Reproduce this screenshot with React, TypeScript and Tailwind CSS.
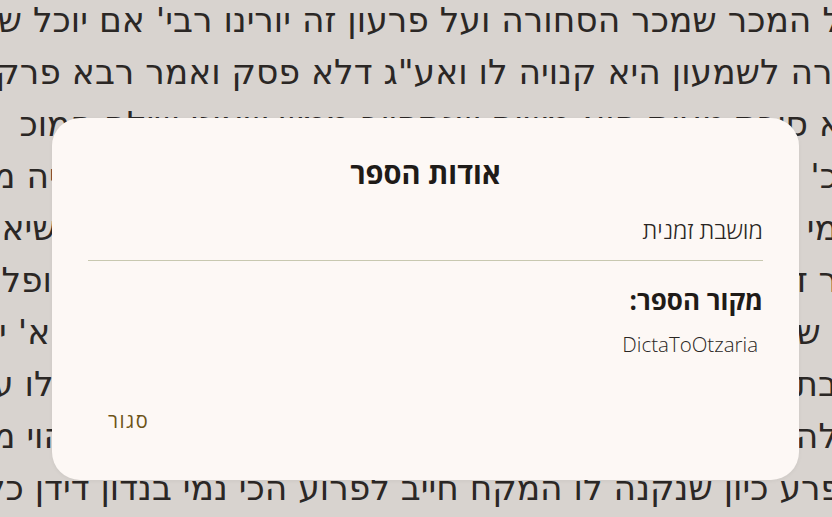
import React from 'react'

// full lines run across the whole page; split lines only show at the edges
type Line = { text?: string; start?: string; end?: string; endCut?: string }

const lines: Line[] = [
  { text: "ל המכר שמכר הסחורה ועל פרעון זה יורינו רבי' אם יוכל שמעון" },
  { text: "ורה לשמעון היא קנויה לו ואע\"ג דלא פסק ואמר רבא פרק השואל" },
  { text: "א סיבת טעות הוא משום שנתחייב ממש שאינו שילם המוכ" },
  { start: "כ' הרא\"ש בתשובה", end: "שהוא קנויה מ" },
  { start: "מי שמכר לחבירו", end: "כל זמן שיאו" },
  { start: "ר דין זה מבואר", end: "בהקפה ופלו" },
  { start: "\u2002ש\u2003לומר דלא", end: "דהתם קא' י", endCut: "-ml-[1px]" },
  { start: "בתי הדין נוהגים", end: "סמך עליו לו ע" },
  { start: "להכי אמרינן", end: "ההוא הוי מ" },
  { text: "פרע כיון שנקנה לו המקח חייב לפרוע הכי נמי בנדון דידן כל" },
]

const App = () => {
  return (
    <div className="relative h-[517px] w-[832px] overflow-hidden bg-[#d8d3cf]">
      <div
        dir="rtl"
        className="-mt-[6px] flex flex-col overflow-hidden text-[34.5px] leading-[52px] text-[#2b2725] font-['DejaVu_Sans',sans-serif]"
      >
        {lines.map((line, i) =>
          line.text ? (
            <div key={i} className="-mr-[10px] whitespace-nowrap">
              {line.text}
            </div>
          ) : (
            <div key={i} className="flex justify-between whitespace-nowrap">
              <span className="-mr-[6px]">{line.start}</span>
              <span className={line.endCut ?? "-ml-[8px]"}>{line.end}</span>
            </div>
          )
        )}
      </div>

      <div
        dir="rtl"
        className="absolute left-[52px] top-[118px] w-[747px] rounded-[28px] bg-[#fdf8f5] px-[36px] pt-[37px] pb-[45px] shadow-[0_1px_4px_rgba(0,0,0,0.05)] font-['Open_Sans','Noto_Sans',sans-serif]"
      >
        <h2 className="text-center text-[29px] leading-[36px] font-bold text-[#1f1b18]">
          אודות הספר
        </h2>
        <div className="mt-[23px] text-[24px] leading-[32px] font-light text-[#2a2623]">
          מושבת זמנית
        </div>
        <div className="mt-[14px] h-px bg-[#c8c8b0]" />
        <div className="mt-[22px] text-[26px] leading-[34px] font-bold text-[#1f1b18]">
          מקור הספר:
        </div>
        <div className="mt-[13px] pr-[5px] text-[20.5px] leading-[28px] font-light text-[#2a2623]">
          DictaToOtzaria
        </div>
        <div className="mt-[49px] flex justify-end pl-[8px]">
          <button className="rounded-full px-[12px] py-0 text-[20px] leading-[28px] tracking-[1.5px] font-medium text-[#6d5417]">
            סגור
          </button>
        </div>
      </div>
    </div>
  )
}

export default App
